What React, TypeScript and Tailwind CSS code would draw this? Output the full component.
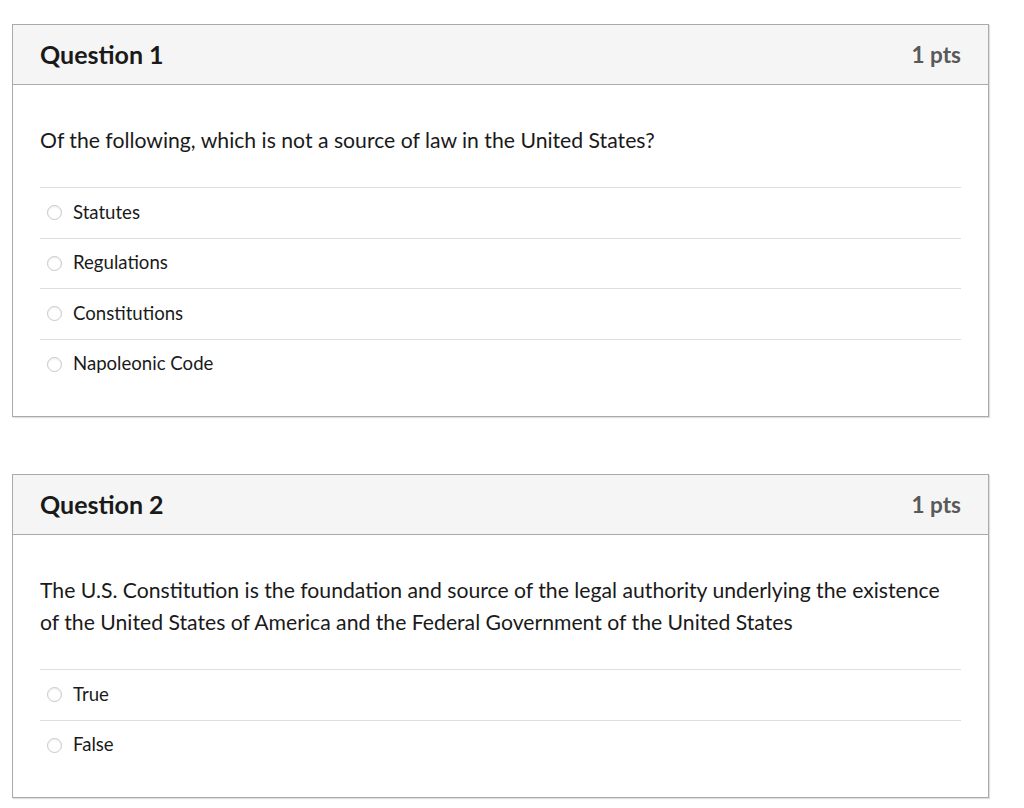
import React from "react";

type Question = {
    title: string;
    points: string;
    text: string;
    answers: string[];
};

const questions: Question[] = [
    {
        title: "Question 1",
        points: "1 pts",
        text: "Of the following, which is not a source of law in the United States?",
        answers: ["Statutes", "Regulations", "Constitutions", "Napoleonic Code"],
    },
    {
        title: "Question 2",
        points: "1 pts",
        text: "The U.S. Constitution is the foundation and source of the legal authority underlying the existence of the United States of America and the Federal Government of the United States",
        answers: ["True", "False"],
    },
];

const Radio = () => (
    <span className="w-[15px] h-[15px] rounded-full border border-[#c8c8c8] bg-white shadow-[inset_0_1px_2px_rgba(0,0,0,0.08)] shrink-0" />
);

const QuestionCard = ({ q }: { q: Question }) => {
    return (
        <div className="w-[977px] border border-[#aaaaaa] bg-white shadow-[1px_1px_1px_rgba(0,0,0,0.12)]">
            <div className="h-[60px] flex flex-row items-center justify-between px-[27px] bg-[#f5f5f5] border-b border-[#aaaaaa]">
                <h2 className="text-[25px] font-bold text-[#1a1a1a]">{q.title}</h2>
                <span className="text-[22.5px] font-bold text-[#595959]">{q.points}</span>
            </div>
            <div className="pt-[39px] pb-[27px] px-[27px]">
                <p className="text-[21.2px] leading-[32px] text-[#1a1a1a] pr-[8px]">{q.text}</p>
                <div className="mt-[31px]">
                    {q.answers.map((a) => (
                        <div key={a} className="h-[50.5px] border-t border-[#dddddd] flex flex-row items-center pl-[7px]">
                            <Radio />
                            <span className="ml-[11px] text-[18.6px] text-[#1a1a1a]">{a}</span>
                        </div>
                    ))}
                </div>
            </div>
        </div>
    );
};

const App = () => {
    return (
        <div className="w-full min-h-[808px] bg-white pt-[24px] pl-[12px] font-['Lato',sans-serif]">
            <div className="flex flex-col gap-[57px]">
                {questions.map((q) => (
                    <QuestionCard key={q.title} q={q} />
                ))}
            </div>
        </div>
    );
};

export default App;
